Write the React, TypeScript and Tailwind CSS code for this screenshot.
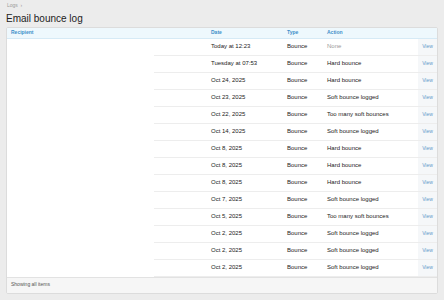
import React from 'react';

const rows: [string, string][] = [
  ['Today at 12:23', 'None'],
  ['Tuesday at 07:53', 'Hard bounce'],
  ['Oct 24, 2025', 'Hard bounce'],
  ['Oct 23, 2025', 'Soft bounce logged'],
  ['Oct 22, 2025', 'Too many soft bounces'],
  ['Oct 14, 2025', 'Soft bounce logged'],
  ['Oct 8, 2025', 'Hard bounce'],
  ['Oct 8, 2025', 'Hard bounce'],
  ['Oct 8, 2025', 'Hard bounce'],
  ['Oct 7, 2025', 'Soft bounce logged'],
  ['Oct 5, 2025', 'Too many soft bounces'],
  ['Oct 2, 2025', 'Soft bounce logged'],
  ['Oct 2, 2025', 'Soft bounce logged'],
  ['Oct 2, 2025', 'Soft bounce logged'],
];

const App: React.FC = () => {
  return (
    <div
      className="w-[444px] h-[300px] bg-[#ececec] px-[6px] pt-[1px] overflow-hidden"
      style={{ fontFamily: '"Liberation Sans", Arial, sans-serif' }}
    >
      <div className="text-[5px] text-[#9a9a9a] h-[8px] leading-[8px] pl-[1px]">Logs &nbsp;›</div>
      <h1 className="text-[10px] leading-[14px] text-[#222] mt-[3px] h-[15px]">Email bounce log</h1>
      <div className="bg-white border border-[#dcdcdc] rounded-[2px] overflow-hidden">
        <table className="w-full border-collapse table-fixed">
          <colgroup>
            <col className="w-[147px]" />
            <col className="w-[53px]" />
            <col className="w-[76px]" />
            <col className="w-[40px]" />
            <col className="w-[95px]" />
            <col className="w-[19px]" />
          </colgroup>
          <thead>
            <tr className="h-[10px] bg-[#eef8fd] border-b border-[#d6eaf6] text-[5px] font-bold text-[#3f8fc9] text-left">
              <th className="pl-[4px] font-bold">Recipient</th>
              <th></th>
              <th className="pl-[4px] font-bold">Date</th>
              <th className="pl-[4px] font-bold">Type</th>
              <th className="pl-[4px] font-bold">Action</th>
              <th></th>
            </tr>
          </thead>
          <tbody className="text-[6px] text-[#222]">
            {rows.map(([date, action], i) => (
              <tr key={i} className="h-[17px]">
                <td></td>
                <td className="border-b border-[#ededed]"></td>
                <td className="pl-[4px] border-b border-[#ededed] whitespace-nowrap">{date}</td>
                <td className="pl-[4px] border-b border-[#ededed]">Bounce</td>
                <td className={`pl-[4px] border-b border-[#ededed] whitespace-nowrap ${action === 'None' ? 'text-[#999]' : ''}`}>
                  {action}
                </td>
                <td className="bg-[#f5f7f9] border-b border-[#ededed] text-center text-[5px] text-[#5f9acb]">View</td>
              </tr>
            ))}
          </tbody>
        </table>
        <div className="h-[16px] bg-[#f6f6f6] border-t border-[#e2e2e2] text-[5px] text-[#555] flex items-center pl-[4px]">
          Showing all items
        </div>
      </div>
    </div>
  );
};

export default App;
